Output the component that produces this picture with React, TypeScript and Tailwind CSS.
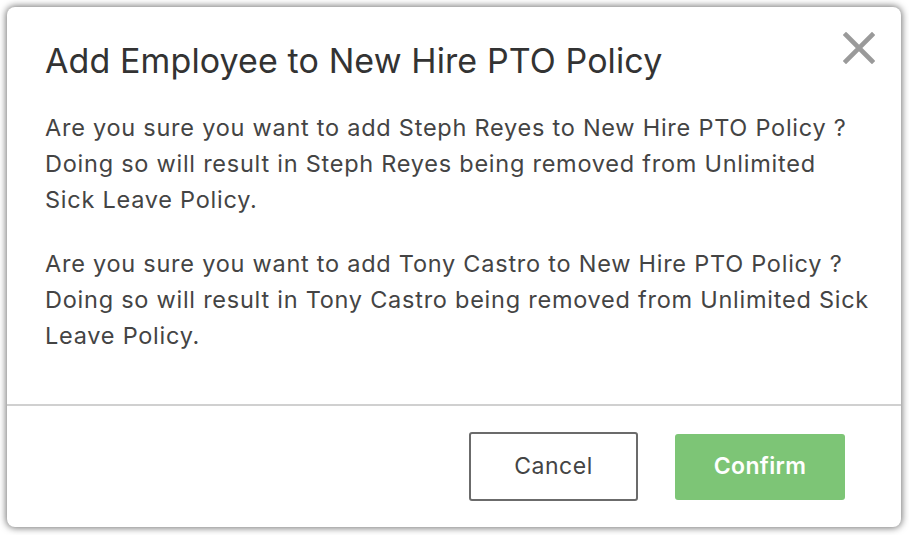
const font = { fontFamily: "Inter, 'Liberation Sans', sans-serif" };

const entries = [
  {
    name: "Steph Reyes",
    lines: ["Doing so will result in Steph Reyes being removed from Unlimited", "Sick Leave Policy."],
  },
  {
    name: "Tony Castro",
    lines: ["Doing so will result in Tony Castro being removed from Unlimited Sick", "Leave Policy."],
  },
];

function CloseIcon() {
  return (
    <svg width="32" height="32" viewBox="0 0 32 32" fill="none">
      <path d="M3 3 L29 29 M29 3 L3 29" stroke="#9a9a9a" strokeWidth="4.6" strokeLinecap="square" />
    </svg>
  );
}

export default function App() {
  const policy = "New Hire PTO Policy";

  return (
    <div className="w-[909px] h-[535px] bg-white p-[7px]" style={font}>
      <div className="relative flex h-[520px] w-[894px] flex-col rounded-lg bg-white shadow-[0_0_7px_1px_rgba(0,0,0,0.55)]">
        <button className="absolute right-[26px] top-[25px]" aria-label="Close">
          <CloseIcon />
        </button>

        <div className="flex-1 px-[38px] pt-[36px]">
          <h2 className="text-[34px] leading-[36px] tracking-[0.1px] text-[#333]">
            Add Employee to {policy}
          </h2>
          <div className="mt-[31px] flex flex-col gap-[28px] whitespace-nowrap text-[23.5px] leading-[36px] tracking-[0.75px] text-[#444]">
            {entries.map(e => (
              <p key={e.name}>
                Are you sure you want to add {e.name} to {policy} ?
                <br />
                {e.lines[0]}
                <br />
                {e.lines[1]}
              </p>
            ))}
          </div>
        </div>

        <div className="border-t-2 border-[#d0d0d0]" />

        <div className="flex h-[121px] items-center justify-end gap-[37px] pr-[56px]">
          <button className="h-[69px] w-[169px] rounded-[3px] border-2 border-[#6b6b6b] text-[23px] tracking-[0.5px] text-[#444]">
            Cancel
          </button>
          <button className="h-[66px] w-[170px] rounded-[3px] bg-[#7dc576] text-[23px] font-semibold tracking-[0.3px] text-white">
            Confirm
          </button>
        </div>
      </div>
    </div>
  );
}
